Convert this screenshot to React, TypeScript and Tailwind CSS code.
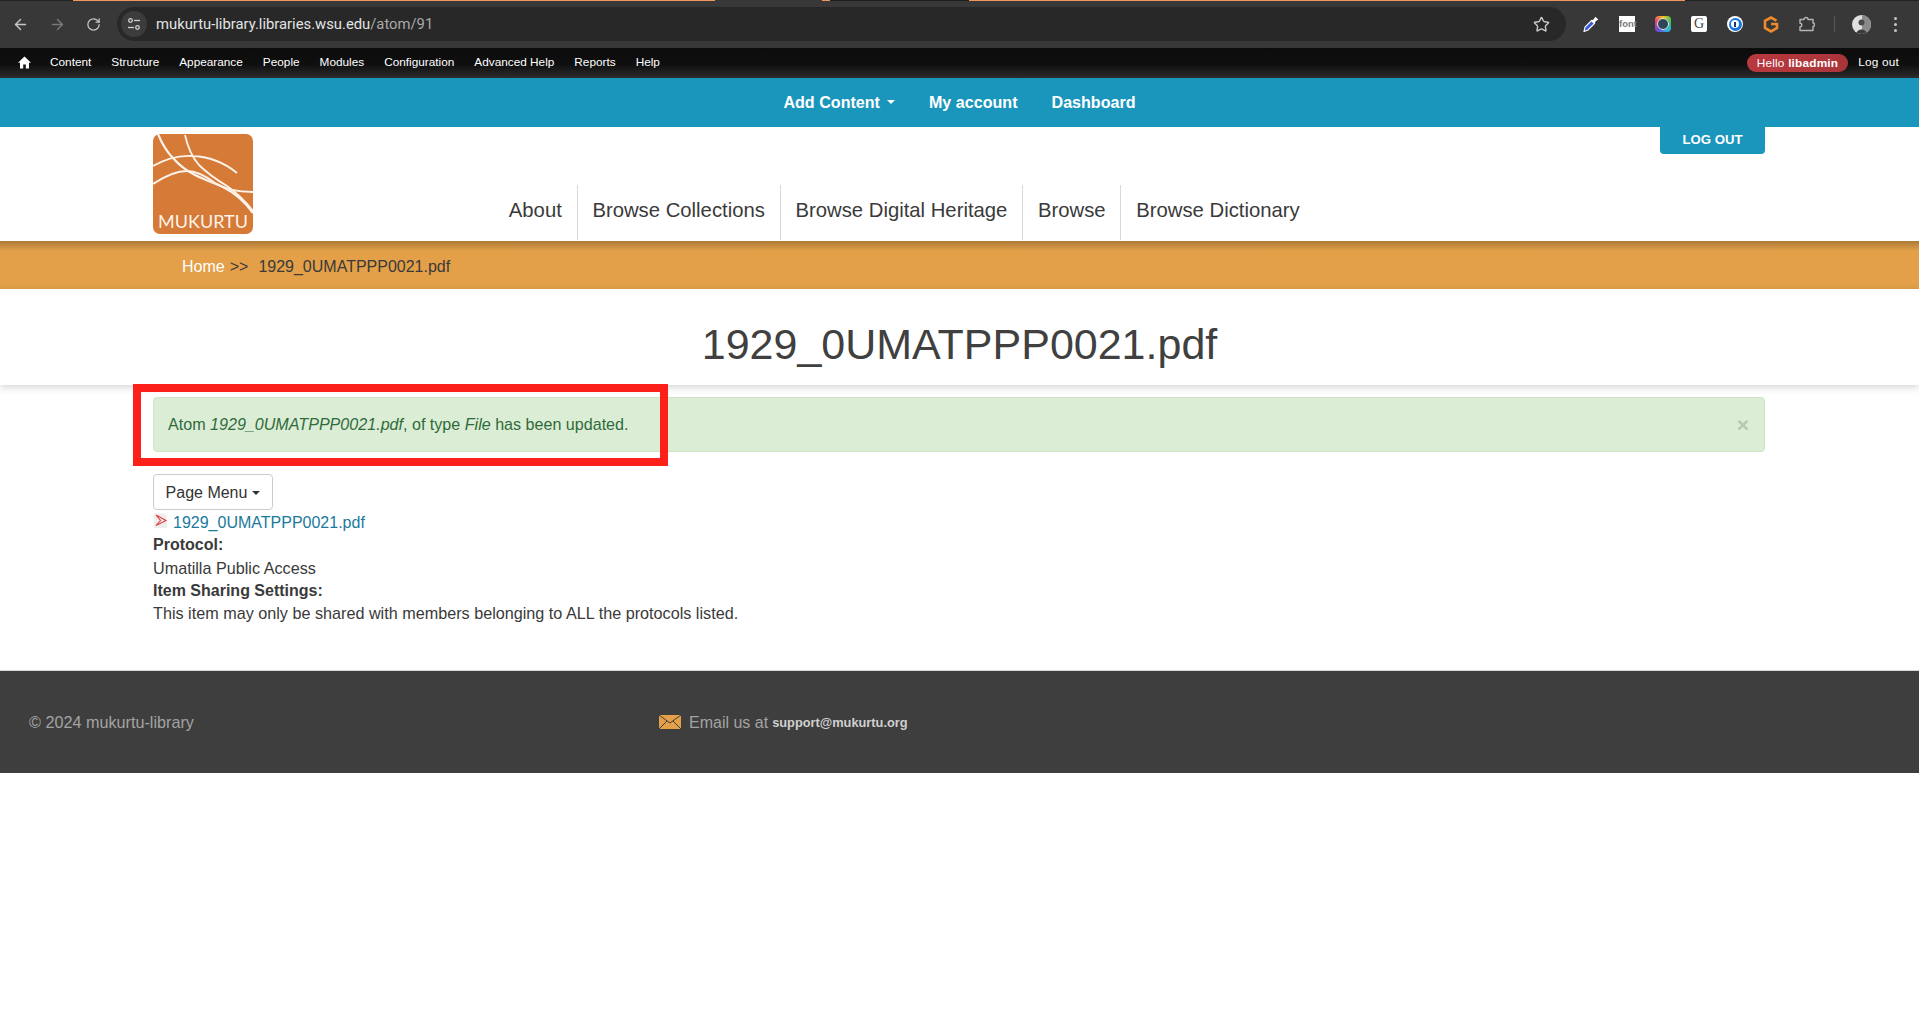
import React from 'react';
import { ArrowLeft, ArrowRight, RotateCw, Star } from 'lucide-react';

const adminLinks = ['Content', 'Structure', 'Appearance', 'People', 'Modules', 'Configuration', 'Advanced Help', 'Reports', 'Help'];
const navLinks = ['About', 'Browse Collections', 'Browse Digital Heritage', 'Browse', 'Browse Dictionary'];

const Logo = () => (
  <div className="relative w-[100px] h-[100px]">
    <svg width="100" height="100" viewBox="0 0 100 100" className="block">
      <rect width="100" height="100" rx="7" fill="#d57a37" />
      <g fill="none" stroke="#fdf3ea" strokeWidth="1.8">
        <path d="M5 0 C10 12 14 18 20 24 C26 31 32 36 42 41 C50 45 58 48 70 53 C82 59 92 68 100 79" strokeWidth="2.2" />
        <path d="M32 1 C34 10 38 22 46 31 C54 39 64 46 74 52 C84 59 93 68 100 77" />
        <path d="M0 32 C14 24 28 21 40 22 C58 23 72 29 84 39" />
        <path d="M0 50 C12 42 24 37 34 37 C44 37 54 43 62 49 C70 54 84 58 100 58" strokeWidth="2" />
      </g>
    </svg>
    <span className="absolute left-0 right-0 bottom-[2px] text-center text-[#fdf3ea] text-[18px] leading-[22px] font-['Lato',sans-serif]">MUKURTU</span>
  </div>
);

const ChromeBar = () => (
  <div className="relative h-12 bg-[#383838] flex items-center pl-[12px] pr-[15px] text-[#c7c7c7]">
    {/* tab strip remnants along the top edge */}
    <div className="absolute top-0 left-0 right-0 h-px flex">
      <div className="w-[73px] bg-[#222222]" />
      <div className="w-[642px] bg-[#f09560]" />
      <div className="w-[107px] bg-[#383838]" />
      <div className="w-[8px] bg-[#f09560]" />
      <div className="w-[139px] bg-[#1f1f1f]" />
      <div className="w-[716px] bg-[#f09560]" />
      <div className="flex-1 bg-[#222222]" />
    </div>
    <ArrowLeft className="w-[17px] h-[17px] mr-[20px]" />
    <ArrowRight className="w-[17px] h-[17px] mr-[20px] text-[#7a7a7a]" />
    <RotateCw className="w-[15px] h-[15px] mr-[16px]" />
    <div className="flex items-center h-[34px] w-[1449px] rounded-full bg-[#282828] pl-[4px] pr-[16px]">
      <div className="w-[26px] h-[26px] rounded-full bg-[#3c3c3c] flex items-center justify-center mr-[9px]">
        <svg width="14" height="14" viewBox="0 0 14 14" fill="none" stroke="#d0d0d0" strokeWidth="1.3">
          <circle cx="3.5" cy="3.5" r="1.8" />
          <path d="M7 3.5 H13" />
          <path d="M1 10.5 H7" />
          <circle cx="10.5" cy="10.5" r="1.8" />
        </svg>
      </div>
      <span className="text-[14.8px] text-[#e3e3e3] font-['Roboto',sans-serif]">
        mukurtu-library.libraries.wsu.edu<span className="text-[#a8a8a8]">/atom/91</span>
      </span>
      <Star className="w-[17px] h-[17px] ml-auto" />
    </div>
    <div className="flex items-center ml-[17px] gap-[20px]">
      <svg width="16" height="16" viewBox="0 0 16 16">
        <path d="M1 15.5 L2 11 L8.5 4.5 L11.5 7.5 L5 14 Z" fill="#3b5bd6" stroke="#fff" strokeWidth="1.1" />
        <path d="M8 4.5 L10.5 3.5 L12.5 0.8 L15.2 3.4 L12.5 5.5 L11.5 8 Z" fill="#fff" />
      </svg>
      <div className="w-4 h-4 bg-white text-[#777] text-[9.5px] font-bold leading-4 text-center font-['Liberation_Sans',sans-serif]">font</div>
      <div className="w-4 h-4 rounded-[4px] bg-[conic-gradient(#f5c518,#36c46a,#2bb6e8,#6a4bd8,#e63b7a,#f5c518)] flex items-center justify-center">
        <div className="w-[12px] h-[12px] rounded-full bg-[#2f4658] border-[1.5px] border-[#e4e4e4]" />
      </div>
      <div className="w-4 h-4 bg-white rounded-[2px] text-[#444] text-[14px] leading-4 text-center font-['Liberation_Serif',serif]">G</div>
      <div className="w-4 h-4 rounded-full bg-white flex items-center justify-center">
        <div className="w-[13px] h-[13px] rounded-full bg-[#1a73d9] flex items-center justify-center">
          <div className="w-[8px] h-[8px] rounded-full bg-white flex justify-center items-center">
            <div className="w-[2px] h-[5px] bg-[#1a3a6a]" />
          </div>
        </div>
      </div>
      <svg width="16" height="17" viewBox="0 0 16 17">
        <path d="M13.5 4.6 L8 1.5 L2 4.8 V12 L8 15.4 L14 12 V8 H8" fill="none" stroke="#ee8a2c" strokeWidth="2.6" />
      </svg>
      <svg width="16" height="16" viewBox="0 0 16 16" fill="none" stroke="#b5b5b5" strokeWidth="1.4" strokeLinejoin="round">
        <path d="M1 3.5 H5 C5 0.8 9 0.8 9 3.5 H14 V7 C16 7 16 10.5 14 10.5 V14.5 H1 V10.8 C3.4 10.8 3.4 7.2 1 7.2 Z" />
      </svg>
    </div>
    <div className="w-px h-4 bg-[#5a5a5a] ml-[19px]" />
    <div className="w-[19px] h-[19px] rounded-full overflow-hidden ml-[17px]">
      <svg width="19" height="19" viewBox="0 0 19 19" className="block">
        <rect width="19" height="19" fill="#e0e0e0" />
        <rect x="10" width="9" height="19" fill="#8a8a8a" />
        <circle cx="9.5" cy="7.5" r="3" fill="#4a4a4a" />
        <path d="M4 19 C5 13 14 13 15 19 Z" fill="#3a3a3a" />
      </svg>
    </div>
    <div className="ml-auto mr-[7px] flex flex-col gap-[3px]">
      <span className="w-[3px] h-[3px] rounded-full bg-[#c7c7c7]" />
      <span className="w-[3px] h-[3px] rounded-full bg-[#c7c7c7]" />
      <span className="w-[3px] h-[3px] rounded-full bg-[#c7c7c7]" />
    </div>
  </div>
);

const AdminBar = () => (
  <div className="h-[30px] pb-[1px] bg-[linear-gradient(#0c0c0c,#0f0f0f_55%,#2c2c2c)] flex items-center text-white text-[11.8px] font-['Liberation_Sans',sans-serif] pl-[18px] pr-[20px]">
    <svg width="13" height="13" viewBox="0 0 13 13" className="mr-[19px]" fill="#fff">
      <path d="M6.5 0.5 L13 6.8 H11 V12.5 H7.8 V8.5 H5.2 V12.5 H2 V6.8 H0 Z" />
    </svg>
    <div className="flex gap-[20px]">
      {adminLinks.map(l => <span key={l}>{l}</span>)}
    </div>
    <span className="ml-auto h-[18px] leading-[18px] rounded-full px-[10px] bg-[linear-gradient(90deg,#b8393f,#a8353a)] tracking-[0.2px]">
      Hello <b>libadmin</b>
    </span>
    <span className="ml-[10px] tracking-[0.2px]">Log out</span>
  </div>
);

export default function App() {
  return (
    <div className="min-h-screen bg-white text-[#3a3a3a] font-['Liberation_Sans',sans-serif] text-[16.2px]">
      <ChromeBar />
      <AdminBar />

      {/* Teal account bar */}
      <div className="h-[49px] bg-[#1a95bb] flex items-center justify-center gap-[34px] text-white font-bold text-[16.1px]">
        <span className="flex items-center">
          Add Content
          <span className="ml-[7px] border-x-[4px] border-x-transparent border-t-[4px] border-t-white" />
        </span>
        <span>My account</span>
        <span>Dashboard</span>
      </div>

      {/* Header */}
      <header className="relative h-[114px] pl-[153px] flex">
        <div className="pt-[7px]"><Logo /></div>
        <nav className="flex items-start mt-[58px] ml-[241px] text-[20.3px] text-[#3a3a3a]">
          {navLinks.map((l, i) => (
            <span key={l} className={`h-[55px] leading-[50px] px-[14.8px] ${i < navLinks.length - 1 ? 'border-r border-[#d8d8d8]' : ''}`}>{l}</span>
          ))}
        </nav>
        <div className="absolute top-0 left-[1660px] w-[105px] h-[27px] bg-[#1a95bb] rounded-b-[4px] text-white font-bold text-[13.2px] text-center leading-[26px]">
          LOG OUT
        </div>
      </header>

      {/* Breadcrumb */}
      <div className="h-[48px] pt-[3px] bg-[linear-gradient(#ad7a38,#e3a048_10px)] flex items-center pl-[182px] text-[16px]">
        <span className="text-white">Home</span>
        <span className="ml-[5px]">&gt;&gt;</span>
        <span className="ml-[10px]">1929_0UMATPPP0021.pdf</span>
      </div>

      {/* Title */}
      <div className="h-[96px] pt-[14px] flex items-center justify-center shadow-[0_2px_8px_rgba(0,0,0,0.18)] text-[43px] text-[#404040]">
        1929_0UMATPPP0021.pdf
      </div>

      {/* Main */}
      <main className="pl-[153px] pr-[154px] pt-[12px] pb-[45px]">
        <div className="relative h-[55px] bg-[#dcedd6] border border-[#cfe5c4] rounded-[4px] flex items-center pl-[14px] pr-[15px] text-[#2f6b3a] text-[16.1px]">
          <span>Atom <i>1929_0UMATPPP0021.pdf</i>, of type <i>File</i> has been updated.</span>
          <span className="ml-auto text-[21px] font-bold text-[#b4c9b0]">×</span>
          <div className="absolute left-[-21px] top-[-14px] w-[535px] h-[82px] border-[8px] border-[#fb2019]" />
        </div>
        <button className="mt-[22px] h-[36px] w-[120px] pt-[1px] border border-[#ccc] rounded-[4px] text-[#333] text-[16px] flex items-center justify-center">
          Page Menu
          <span className="ml-[5px] border-x-[4px] border-x-transparent border-t-[4px] border-t-[#333]" />
        </button>
        <div className="flex items-center h-[23px] mt-[1px] text-[#1a7a9c] text-[16px]">
          <svg width="16" height="16" viewBox="0 0 16 16" className="mr-[4px] -mt-[4px]">
            <path d="M1 0.5 H11 L14 3.5 V15 H1 Z" fill="#eeeeee" />
            <path d="M3 2 L13 7.5 L3 12.5 L7.5 7.5 Z" fill="none" stroke="#e23b3b" strokeWidth="1.1" />
          </svg>
          1929_0UMATPPP0021.pdf
        </div>
        <div className="leading-[22.8px] font-bold text-[16px]">Protocol:</div>
        <div className="leading-[22.8px]">Umatilla Public Access</div>
        <div className="leading-[22.8px] font-bold text-[16px]">Item Sharing Settings:</div>
        <div className="leading-[22.8px]">This item may only be shared with members belonging to ALL the protocols listed.</div>
      </main>

      {/* Footer */}
      <footer className="h-[103px] bg-[#3e3e3e] border-t border-[#d8d8d8] flex items-center pl-[29px] text-[#a3a3a3]">
        <span className="w-[630px]">© 2024 mukurtu-library</span>
        <svg width="22" height="14" viewBox="0 0 22 14" className="mr-[8px]">
          <rect width="22" height="14" fill="#e3a048" />
          <path d="M0 0 L11 8 L22 0 M0 14 L8 6 M22 14 L14 6" fill="none" stroke="#3e3e3e" strokeWidth="1" />
        </svg>
        <span className="text-[16px] mt-[1px]">Email us at</span>
        <span className="ml-[4px] text-[12.8px] font-bold text-[#d0d0d0] mt-[1px]">support@mukurtu.org</span>
      </footer>
    </div>
  );
}
